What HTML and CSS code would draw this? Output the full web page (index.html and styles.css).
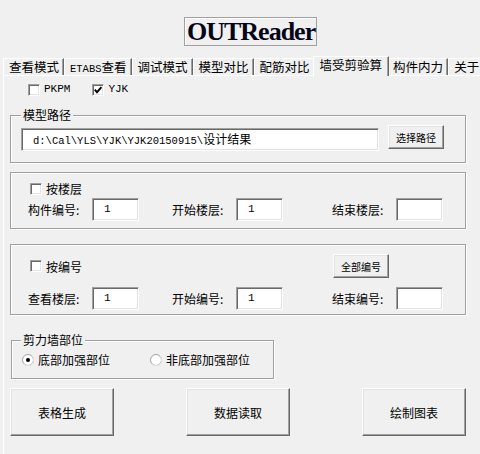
FILE: index.html
```html
<!DOCTYPE html>
<html lang="zh-CN">
<head>
<meta charset="utf-8">
<title>OUTReader</title>
<link rel="stylesheet" href="styles.css">
</head>
<body>
<div class="title-row"><div class="title">OUTReader</div></div>
<div class="tabstrip">
  <div class="tab">查看模式</div>
  <div class="tab"><span class="mono">ETABS</span>查看</div>
  <div class="tab">调试模式</div>
  <div class="tab">模型对比</div>
  <div class="tab">配筋对比</div>
  <div class="tab active">墙受剪验算</div>
  <div class="tab">构件内力</div>
  <div class="tab">关于</div>
</div>
<div class="panel">
  <div class="source-row">
    <div class="check"><span class="box"></span><span class="mono src">PKPM</span></div>
    <div class="check second"><span class="box"><svg class="tick" viewBox="0 0 12 12" width="12" height="12"><path d="M2.8 5.6 L5 8.2 L9.4 3.2" fill="none" stroke="#000" stroke-width="1.9"/></svg></span><span class="mono src">YJK</span></div>
  </div>

  <div class="group g-path">
    <div class="group-label">模型路径</div>
    <div class="path-row">
      <div class="input path-input"><span class="mono">d:\Cal\YLS\YJK\YJK20150915\</span>设计结果</div>
      <div class="btn small">选择路径</div>
    </div>
  </div>

  <div class="group g-floor">
    <div class="check-row"><div class="check"><span class="box"></span>按楼层</div></div>
    <div class="fields">
      <div class="fld"><span class="lbl">构件编号:</span><span class="input val">1</span></div>
      <div class="fld"><span class="lbl">开始楼层:</span><span class="input val">1</span></div>
      <div class="fld"><span class="lbl">结束楼层:</span><span class="input val"></span></div>
    </div>
  </div>

  <div class="group g-num">
    <div class="top-row">
      <div class="check"><span class="box"></span>按编号</div>
      <div class="btn small all">全部编号</div>
    </div>
    <div class="fields">
      <div class="fld"><span class="lbl">查看楼层:</span><span class="input val">1</span></div>
      <div class="fld"><span class="lbl">开始编号:</span><span class="input val">1</span></div>
      <div class="fld"><span class="lbl">结束编号:</span><span class="input val"></span></div>
    </div>
  </div>

  <div class="group g-wall">
    <div class="group-label">剪力墙部位</div>
    <div class="radio-row">
      <div class="radio-item">
        <svg class="radio" viewBox="0 0 12 12" width="12" height="12"><circle cx="6" cy="6" r="5.5" fill="#fff" stroke="#a0a0a0"/><path d="M10 2 A5.5 5.5 0 0 1 2 10" fill="none" stroke="#e3e3e3"/><circle cx="6" cy="6" r="2" fill="#000"/></svg>
        <span>底部加强部位</span>
      </div>
      <div class="radio-item second">
        <svg class="radio" viewBox="0 0 12 12" width="12" height="12"><circle cx="6" cy="6" r="5.5" fill="#fff" stroke="#a0a0a0"/><path d="M10 2 A5.5 5.5 0 0 1 2 10" fill="none" stroke="#e3e3e3"/></svg>
        <span>非底部加强部位</span>
      </div>
    </div>
  </div>

  <div class="actions">
    <div class="btn big">表格生成</div>
    <div class="btn big">数据读取</div>
    <div class="btn big">绘制图表</div>
  </div>
</div>
</body>
</html>
```

FILE: styles.css
```css
* { box-sizing: border-box; }
html, body { margin: 0; padding: 0; }
body {
  width: 480px;
  height: 454px;
  overflow: hidden;
  background: #f0f0f0;
  color: #000;
  font-family: "Noto Sans CJK SC", "Noto Sans", sans-serif;
  font-size: 12px;
}
.mono {
  font-family: "Liberation Mono", "DejaVu Sans Mono", monospace;
  font-size: 10.5px;
}
.mono.src { font-size: 11px; }

.title-row { height: 46px; padding: 17px 0 0 184px; }
.title {
  width: 133px;
  height: 29px;
  border: 1px solid #a0a0a0;
  box-shadow: inset 1px 1px 0 #fff;
  padding-left: 2px;
  font-family: "Liberation Serif", serif;
  font-weight: bold;
  font-size: 26px;
  letter-spacing: -1px;
  line-height: 27px;
  color: #050518;
  white-space: nowrap;
}

.tabstrip {
  display: flex;
  align-items: flex-end;
  height: 19px;
  margin-top: 10px;
  padding-left: 3px;
  white-space: nowrap;
}
.tab {
  flex: none;
  height: 17px;
  padding: 0 4px 0 5px;
  border-top: 1px solid #fff;
  border-left: 1px solid #fff;
  border-right: 1px solid #696969;
  box-shadow: inset -1px 0 0 #a0a0a0;
  font-size: 12.5px;
  line-height: 16px;
}
.tab .mono { font-size: 10.5px; }
.tab.active {
  position: relative;
  z-index: 1;
  height: 20px;
  margin: 0 -2px -1px;
  padding: 0 6px 3px;
  background: #f0f0f0;
}

.panel {
  margin-left: 3px;
  height: 400px;
  border-top: 1px solid #fff;
  border-left: 1px solid #fff;
}

.source-row {
  display: flex;
  height: 20px;
  padding: 7px 0 0 24px;
}
.check {
  display: flex;
  align-items: center;
  gap: 4px;
  height: 13px;
  line-height: 13px;
}
.check.second { margin-left: 22px; }
.box {
  width: 12px;
  height: 12px;
  flex: none;
  background: #fff;
  border: 1px solid;
  border-color: #a0a0a0 #fff #fff #a0a0a0;
  box-shadow: inset 1px 1px 0 #696969, inset -1px -1px 0 #e3e3e3;
  position: relative;
}
.tick { display: block; margin: -1px; }

.group {
  position: relative;
  width: 456px;
  margin-left: 6px;
  border: 1px solid #a0a0a0;
  box-shadow: inset 1px 1px 0 #fff, 1px 1px 0 #fff;
}
.group-label {
  position: absolute;
  top: -8px;
  left: 10px;
  padding: 0 2px;
  background: #f0f0f0;
  line-height: 14px;
}

.g-path { height: 48px; margin-top: 19px; }
.path-row {
  display: flex;
  align-items: flex-start;
  gap: 9px;
  padding-left: 10px;
}
.input {
  display: block;
  height: 23px;
  background: #fff;
  border: 1px solid;
  border-color: #a0a0a0 #fff #fff #a0a0a0;
  box-shadow: inset 1px 1px 0 #696969, inset -1px -1px 0 #e3e3e3;
  line-height: 20px;
  white-space: nowrap;
}
.path-input { width: 358px; margin-top: 12px; padding-left: 11px; }
.btn {
  display: flex;
  align-items: center;
  justify-content: center;
  background: #f0f0f0;
  border: 1px solid;
  border-color: #fff #696969 #696969 #fff;
  box-shadow: inset -1px -1px 0 #a0a0a0, inset 1px 1px 0 #e3e3e3;
  white-space: nowrap;
}
.btn.small { width: 56px; height: 24px; font-size: 10px; }
.path-row .btn.small { margin-top: 9px; }

.g-floor { height: 57px; margin-top: 9px; padding-top: 9px; }
.check-row { display: flex; height: 13px; padding-left: 19px; }
.fields {
  display: grid;
  grid-template-columns: 144px 160px 1fr;
  padding-left: 17px;
  margin-top: 3px;
}
.fld { display: flex; align-items: center; }
.lbl { width: 64px; flex: none; }
.input.val {
  width: 47px;
  padding-left: 11px;
  font-family: "Liberation Mono", monospace;
  font-size: 11px;
  line-height: 21px;
}

.g-num { height: 71px; margin-top: 15px; padding-top: 9px; }
.top-row {
  display: flex;
  align-items: center;
  height: 24px;
  padding-left: 19px;
}
.btn.all { margin-left: auto; margin-right: 76px; }
.g-num .fields { margin-top: 9px; }

.g-wall {
  width: 263px;
  height: 39px;
  margin: 25px 0 0 7px;
  padding: 13px 0 0 10px;
}
.g-wall .group-label { left: 9px; }
.radio-row { display: flex; height: 12px; align-items: center; }
.radio-item { display: flex; align-items: center; gap: 4px; line-height: 14px; }
.radio-item.second { margin-left: 40px; }
.radio { display: block; flex: none; }

.actions {
  display: flex;
  gap: 72px;
  margin: 9px 0 0 6px;
}
.btn.big { width: 104px; height: 48px; font-size: 12px; }
```
